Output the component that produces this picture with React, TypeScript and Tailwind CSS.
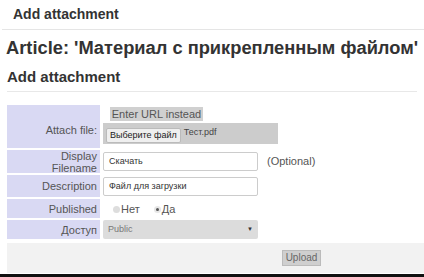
export default function App() {
  const font = { fontFamily: '"Liberation Sans", Arial, sans-serif' };
  return (
    <div className="w-[424px] h-[277px] bg-white overflow-hidden relative text-[#333]" style={font}>
      <div className="ml-[2px] h-[30px] border-b border-[#e5e5e5] pl-[11px] pt-[6px] text-[14px] font-bold leading-[17px]">
        Add attachment
      </div>
      <div className="px-[7px]">
        <h1 className="mt-[7px] -ml-[1px] text-[18.3px] font-bold leading-[22px] whitespace-nowrap">
          Article: 'Материал с прикрепленным файлом'
        </h1>
        <h2 className="mt-[9px] h-[24px] border-b border-[#e8e8e8] text-[15px] font-bold leading-[18px]">
          Add attachment
        </h2>

        <div className="mt-[13px] flex flex-col gap-[2px] text-[11px] text-[#555]">
          <div className="flex gap-[3px] h-[43px]">
            <div className="w-[93px] bg-[#d9d9f3] flex items-end justify-end pr-[3px] pb-[10px]">Attach file:</div>
            <div className="flex flex-col pt-[2px] gap-[2px]">
              <div className="ml-[7px] w-[93px] h-[14px] bg-[#d0d0d0] text-[11px] leading-[14px] text-center text-[#555]">
                Enter URL instead
              </div>
              <div className="w-[175px] h-[21px] bg-[#cccccc] flex items-start pl-[3px] pt-[5px] gap-[3px]">
                <div className="h-[15px] px-[3px] bg-[#efefef] border border-[#bbb] rounded-[2px] text-[9px] leading-[13px] text-[#222]">
                  Выберите файл
                </div>
                <span className="text-[9px] leading-[9px] text-[#444]">Тест.pdf</span>
              </div>
            </div>
          </div>

          <div className="flex gap-[3px] h-[23px]">
            <div className="w-[93px] bg-[#d9d9f3] flex flex-col items-end justify-center pr-[3px] leading-[12px] text-right">
              <span>Display</span>
              <span>Filename</span>
            </div>
            <div className="flex items-center">
              <div className="w-[155px] h-[19px] border border-[#ccc] rounded-[2px] bg-white pl-[5px] text-[9px] leading-[17px] text-[#333]">
                Скачать
              </div>
              <span className="ml-[9px] text-[11px] text-[#555]">(Optional)</span>
            </div>
          </div>

          <div className="flex gap-[3px] h-[22px]">
            <div className="w-[93px] bg-[#d9d9f3] flex items-center justify-end pr-[3px]">Description</div>
            <div className="flex items-center">
              <div className="w-[155px] h-[19px] border border-[#ccc] rounded-[2px] bg-white pl-[5px] text-[9px] leading-[17px] text-[#333]">
                Файл для загрузки
              </div>
            </div>
          </div>

          <div className="flex gap-[3px] h-[19px]">
            <div className="w-[93px] bg-[#d9d9f3] flex items-center justify-end pr-[3px] pt-[1px]">Published</div>
            <div className="flex items-center pl-[10px] pt-[2px] text-[11px] text-[#555]">
              <span className="w-[7px] h-[7px] rounded-full bg-[#ddd] mr-[1px]" />
              <span>Нет</span>
              <span className="ml-[14px] w-[7px] h-[7px] rounded-full bg-[#e6e6e6] flex items-center justify-center mr-[1px]">
                <span className="w-[3px] h-[3px] rounded-full bg-[#555]" />
              </span>
              <span>Да</span>
            </div>
          </div>

          <div className="flex gap-[3px] h-[19px]">
            <div className="w-[93px] bg-[#d9d9f3] flex items-center justify-end pr-[3px] pt-[1px]">Доступ</div>
            <div className="flex items-center">
              <div className="w-[155px] h-[19px] rounded-[2px] bg-[#dcdcdc] pl-[5px] pr-[5px] flex items-center justify-between text-[9px] text-[#777]">
                <span>Public</span>
                <span className="text-[6px] text-[#333]">▼</span>
              </div>
            </div>
          </div>
        </div>

        <div className="mt-[4px] h-[30px] bg-[#f2f2f2] -mr-[7px] flex items-center pl-[275px]">
          <div className="w-[39px] h-[16px] bg-[#cfcfcf] border border-[#bbb] text-[10px] leading-[14px] text-center text-[#666]">
            Upload
          </div>
        </div>
      </div>
      <div className="absolute left-0 right-0 bottom-0 h-[3px] bg-[#111]" />
    </div>
  );
}
